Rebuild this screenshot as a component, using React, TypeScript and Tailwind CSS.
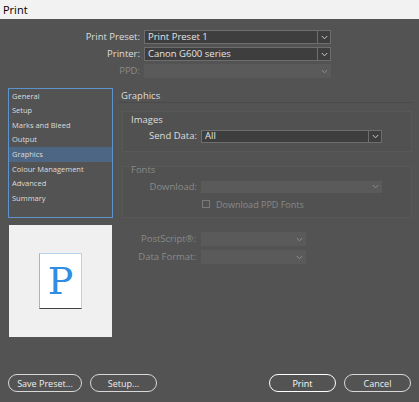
import React from "react";

const Chevron = ({ dim }: { dim?: boolean }) => (
  <svg width="7" height="5" viewBox="0 0 7 5" className="block">
    <path d="M0.8 1 L3.5 3.8 L6.2 1" fill="none" stroke={dim ? "#8c8c8c" : "#c8c8c8"} strokeWidth="1" />
  </svg>
);

const Select = ({ value, w, h, disabled }: { value?: string; w: string; h: string; disabled?: boolean }) =>
  disabled ? (
    <div className={`${w} ${h} bg-[#5a5a5a] flex items-center justify-end pr-[3px]`}>
      <Chevron dim />
    </div>
  ) : (
    <div className={`${w} ${h} bg-[#3e3e3e] border border-[#6e6e6e] flex items-stretch`}>
      <div className="flex-1 flex items-center pl-[3px] text-[#e4e4e4] text-[9.5px] leading-none">{value}</div>
      <div className="w-[13px] border-l border-[#6e6e6e] flex items-center justify-center">
        <Chevron />
      </div>
    </div>
  );

const items = ["General", "Setup", "Marks and Bleed", "Output", "Graphics", "Colour Management", "Advanced", "Summary"];

export default function App() {
  return (
    <div className="w-[419px] h-[402px] bg-[#535353] flex flex-col overflow-hidden" style={{ fontFamily: '"Open Sans", "Noto Sans", sans-serif' }}>
      <div className="h-[19px] bg-[#f2f2f2] flex items-center pl-[3px] text-[11px] text-black leading-none">Print</div>

      <div className="flex flex-col gap-[3px] mt-[11px]">
        <div className="flex items-center h-[14px]">
          <div className="w-[140px] text-right text-[9.5px] text-[#dedede] leading-none">Print Preset:</div>
          <div className="ml-[4px]"><Select value="Print Preset 1" w="w-[187px]" h="h-[14px]" /></div>
        </div>
        <div className="flex items-center h-[14px]">
          <div className="w-[140px] text-right text-[9.5px] text-[#dedede] leading-none">Printer:</div>
          <div className="ml-[4px]"><Select value="Canon G600 series" w="w-[187px]" h="h-[14px]" /></div>
        </div>
        <div className="flex items-center h-[14px]">
          <div className="w-[140px] text-right text-[9.5px] text-[#8a8a8a] leading-none">PPD:</div>
          <div className="ml-[4px]"><Select disabled w="w-[187px]" h="h-[14px]" /></div>
        </div>
      </div>

      <div className="flex mt-[10px] h-[249px]">
        <div className="ml-[8px] w-[105px] flex flex-col">
          <div className="h-[130px] border border-[#5d93cc] flex flex-col">
            {items.map((it) => (
              <div
                key={it}
                className={`h-[14.6px] flex items-center pl-[3px] text-[7.5px] leading-none text-[#dcdcdc] ${it === "Graphics" ? "bg-[#4c6684]" : ""}`}
              >
                {it}
              </div>
            ))}
          </div>
          <div className="mt-[7px] ml-[1px] w-[103px] h-[112px] bg-[#f0f0f0] flex items-center justify-center">
            <div className="w-[43px] h-[56px] bg-white border border-[#b9d4f0] border-b-[#444] border-l-[#9fb6cf] flex items-center justify-center">
              <span className="text-[38px] leading-none text-[#2f8de4]" style={{ fontFamily: '"DejaVu Serif", serif' }}>P</span>
            </div>
          </div>
        </div>

        <div className="ml-[5px] w-[295px] flex flex-col">
          <div className="h-[12px] flex items-end pl-[3px] text-[9.5px] text-[#dedede] leading-none">Graphics</div>
          <div className="mt-[2px] h-[1px] bg-[#4a4a4a]"></div>

          <div className="mt-[8px] ml-[4px] w-[290px] h-[41px] bg-[#515151] border border-[#585858] flex flex-col">
            <div className="pl-[8px] pt-[3px] text-[9.5px] text-[#dedede] leading-none">Images</div>
            <div className="flex items-center mt-[5px]">
              <div className="w-[74px] text-right text-[9.5px] text-[#dedede] leading-none">Send Data:</div>
              <div className="ml-[4px]"><Select value="All" w="w-[181px]" h="h-[13px]" /></div>
            </div>
          </div>

          <div className="mt-[14px] ml-[4px] w-[290px] h-[52px] bg-[#515151] border border-[#585858] flex flex-col">
            <div className="pl-[8px] -mt-[2px] text-[9.5px] text-[#8a8a8a] leading-none">Fonts</div>
            <div className="flex items-center mt-[6px]">
              <div className="w-[74px] text-right text-[9.5px] text-[#8a8a8a] leading-none">Download:</div>
              <div className="ml-[4px]"><Select disabled w="w-[181px]" h="h-[12px]" /></div>
            </div>
            <div className="flex items-center mt-[7px] ml-[79px]">
              <div className="w-[8px] h-[8px] border border-[#7a7a7a]"></div>
              <div className="ml-[6px] text-[9px] text-[#8a8a8a] leading-none">Download PPD Fonts</div>
            </div>
          </div>

          <div className="flex flex-col gap-[4px] mt-[14px]">
            <div className="flex items-center h-[14px]">
              <div className="w-[78px] text-right text-[9.5px] text-[#8a8a8a] leading-none">PostScript®:</div>
              <div className="ml-[5px]"><Select disabled w="w-[105px]" h="h-[14px]" /></div>
            </div>
            <div className="flex items-center h-[14px]">
              <div className="w-[78px] text-right text-[9.5px] text-[#8a8a8a] leading-none">Data Format:</div>
              <div className="ml-[5px]"><Select disabled w="w-[105px]" h="h-[14px]" /></div>
            </div>
          </div>
        </div>
      </div>

      <div className="flex items-center mt-[37px] h-[18px]">
        <div className="ml-[8px] w-[74px] h-[18px] rounded-full border border-[#d8d8d8] flex items-center justify-center text-[9px] text-[#eeeeee] leading-none">Save Preset...</div>
        <div className="ml-[8px] w-[67px] h-[18px] rounded-full border border-[#d8d8d8] flex items-center justify-center text-[9px] text-[#eeeeee] leading-none">Setup...</div>
        <div className="ml-[112px] w-[67px] h-[18px] rounded-full border-[1.5px] border-[#ffffff] flex items-center justify-center text-[9px] text-[#ffffff] leading-none">Print</div>
        <div className="ml-[8px] w-[67px] h-[18px] rounded-full border border-[#d8d8d8] flex items-center justify-center text-[9px] text-[#eeeeee] leading-none">Cancel</div>
      </div>
    </div>
  );
}
